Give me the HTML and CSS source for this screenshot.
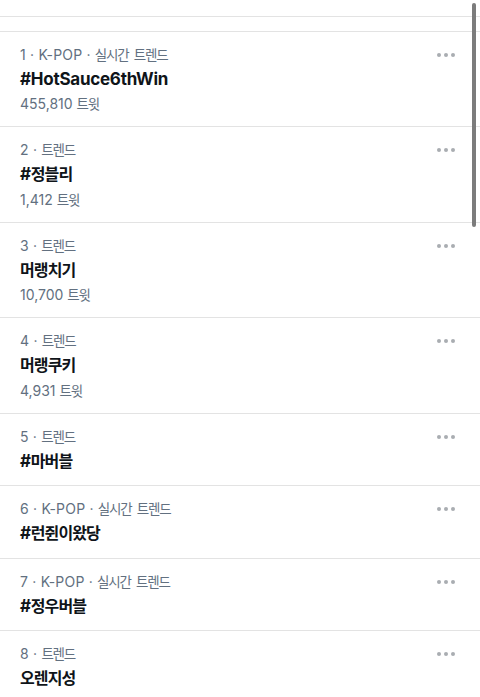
FILE: index.html
```html
<!DOCTYPE html>
<html lang="ko">
<head>
<meta charset="utf-8">
<link rel="stylesheet" href="styles.css">
</head>
<body>
<div class="page">
  <div class="band"></div>
  <ul class="trends">
    <li class="trend">
      <div class="meta">1 · K-POP · <span class="ko">실시간</span> <span class="ko">트렌드</span></div>
      <div class="title">#HotSauce6thWin</div>
      <div class="count">455,810 <span class="ko">트윗</span></div>
      <span class="more"><i></i><i></i><i></i></span>
    </li>
    <li class="trend">
      <div class="meta">2 · <span class="ko">트렌드</span></div>
      <div class="title">#<span class="ko">정블리</span></div>
      <div class="count">1,412 <span class="ko">트윗</span></div>
      <span class="more"><i></i><i></i><i></i></span>
    </li>
    <li class="trend">
      <div class="meta">3 · <span class="ko">트렌드</span></div>
      <div class="title"><span class="ko">머랭치기</span></div>
      <div class="count">10,700 <span class="ko">트윗</span></div>
      <span class="more"><i></i><i></i><i></i></span>
    </li>
    <li class="trend">
      <div class="meta">4 · <span class="ko">트렌드</span></div>
      <div class="title"><span class="ko">머랭쿠키</span></div>
      <div class="count">4,931 <span class="ko">트윗</span></div>
      <span class="more"><i></i><i></i><i></i></span>
    </li>
    <li class="trend">
      <div class="meta">5 · <span class="ko">트렌드</span></div>
      <div class="title">#<span class="ko">마버블</span></div>
      <span class="more"><i></i><i></i><i></i></span>
    </li>
    <li class="trend">
      <div class="meta">6 · K-POP · <span class="ko">실시간</span> <span class="ko">트렌드</span></div>
      <div class="title">#<span class="ko">런쥔이왔당</span></div>
      <span class="more"><i></i><i></i><i></i></span>
    </li>
    <li class="trend">
      <div class="meta">7 · K-POP · <span class="ko">실시간</span> <span class="ko">트렌드</span></div>
      <div class="title">#<span class="ko">정우버블</span></div>
      <span class="more"><i></i><i></i><i></i></span>
    </li>
    <li class="trend">
      <div class="meta">8 · <span class="ko">트렌드</span></div>
      <div class="title"><span class="ko">오렌지성</span></div>
      <span class="more"><i></i><i></i><i></i></span>
    </li>
  </ul>
  <div class="scrollbar"></div>
</div>
</body>
</html>
```

FILE: styles.css
```css
html, body {
  margin: 0;
  padding: 0;
  background: #ffffff;
}
body {
  font-family: Inter, "Noto Sans CJK KR", sans-serif;
  width: 480px;
  height: 697px;
  overflow: hidden;
}
.page {
  position: relative;
  padding-top: 16px;
}
.band {
  height: 14px;
  border-top: 1px solid #e3e3e3;
  border-bottom: 1px solid #e3e3e3;
}
.trends {
  list-style: none;
  margin: 0;
  padding: 0;
}
.trend {
  position: relative;
  padding: 13px 20px 12.3px 20px;
  border-bottom: 1px solid #e3e3e3;
}
.meta {
  font-size: 14px;
  line-height: 20px;
  color: #627080;
  letter-spacing: 0.2px;
}
.title {
  margin-top: 2px;
  font-size: 17px;
  line-height: 24px;
  font-weight: 700;
  color: #0f1419;
  letter-spacing: -0.25px;
}
.count {
  margin-top: 3.2px;
  font-size: 14px;
  line-height: 20px;
  color: #627080;
}
.meta .ko,
.count .ko {
  font-size: 13.5px;
  letter-spacing: -1.2px;
  margin-right: 1.2px;
}
.title .ko {
  font-size: 16px;
  letter-spacing: -0.9px;
  margin-right: 0.9px;
}
.more {
  position: absolute;
  top: 21px;
  right: 25px;
  display: flex;
  gap: 3px;
}
.more i {
  width: 4px;
  height: 4px;
  border-radius: 50%;
  background: #a9adb1;
}
.scrollbar {
  position: absolute;
  top: 3px;
  right: 4px;
  width: 4px;
  height: 224px;
  border-radius: 2px;
  background: #7c7c7c;
}
```
